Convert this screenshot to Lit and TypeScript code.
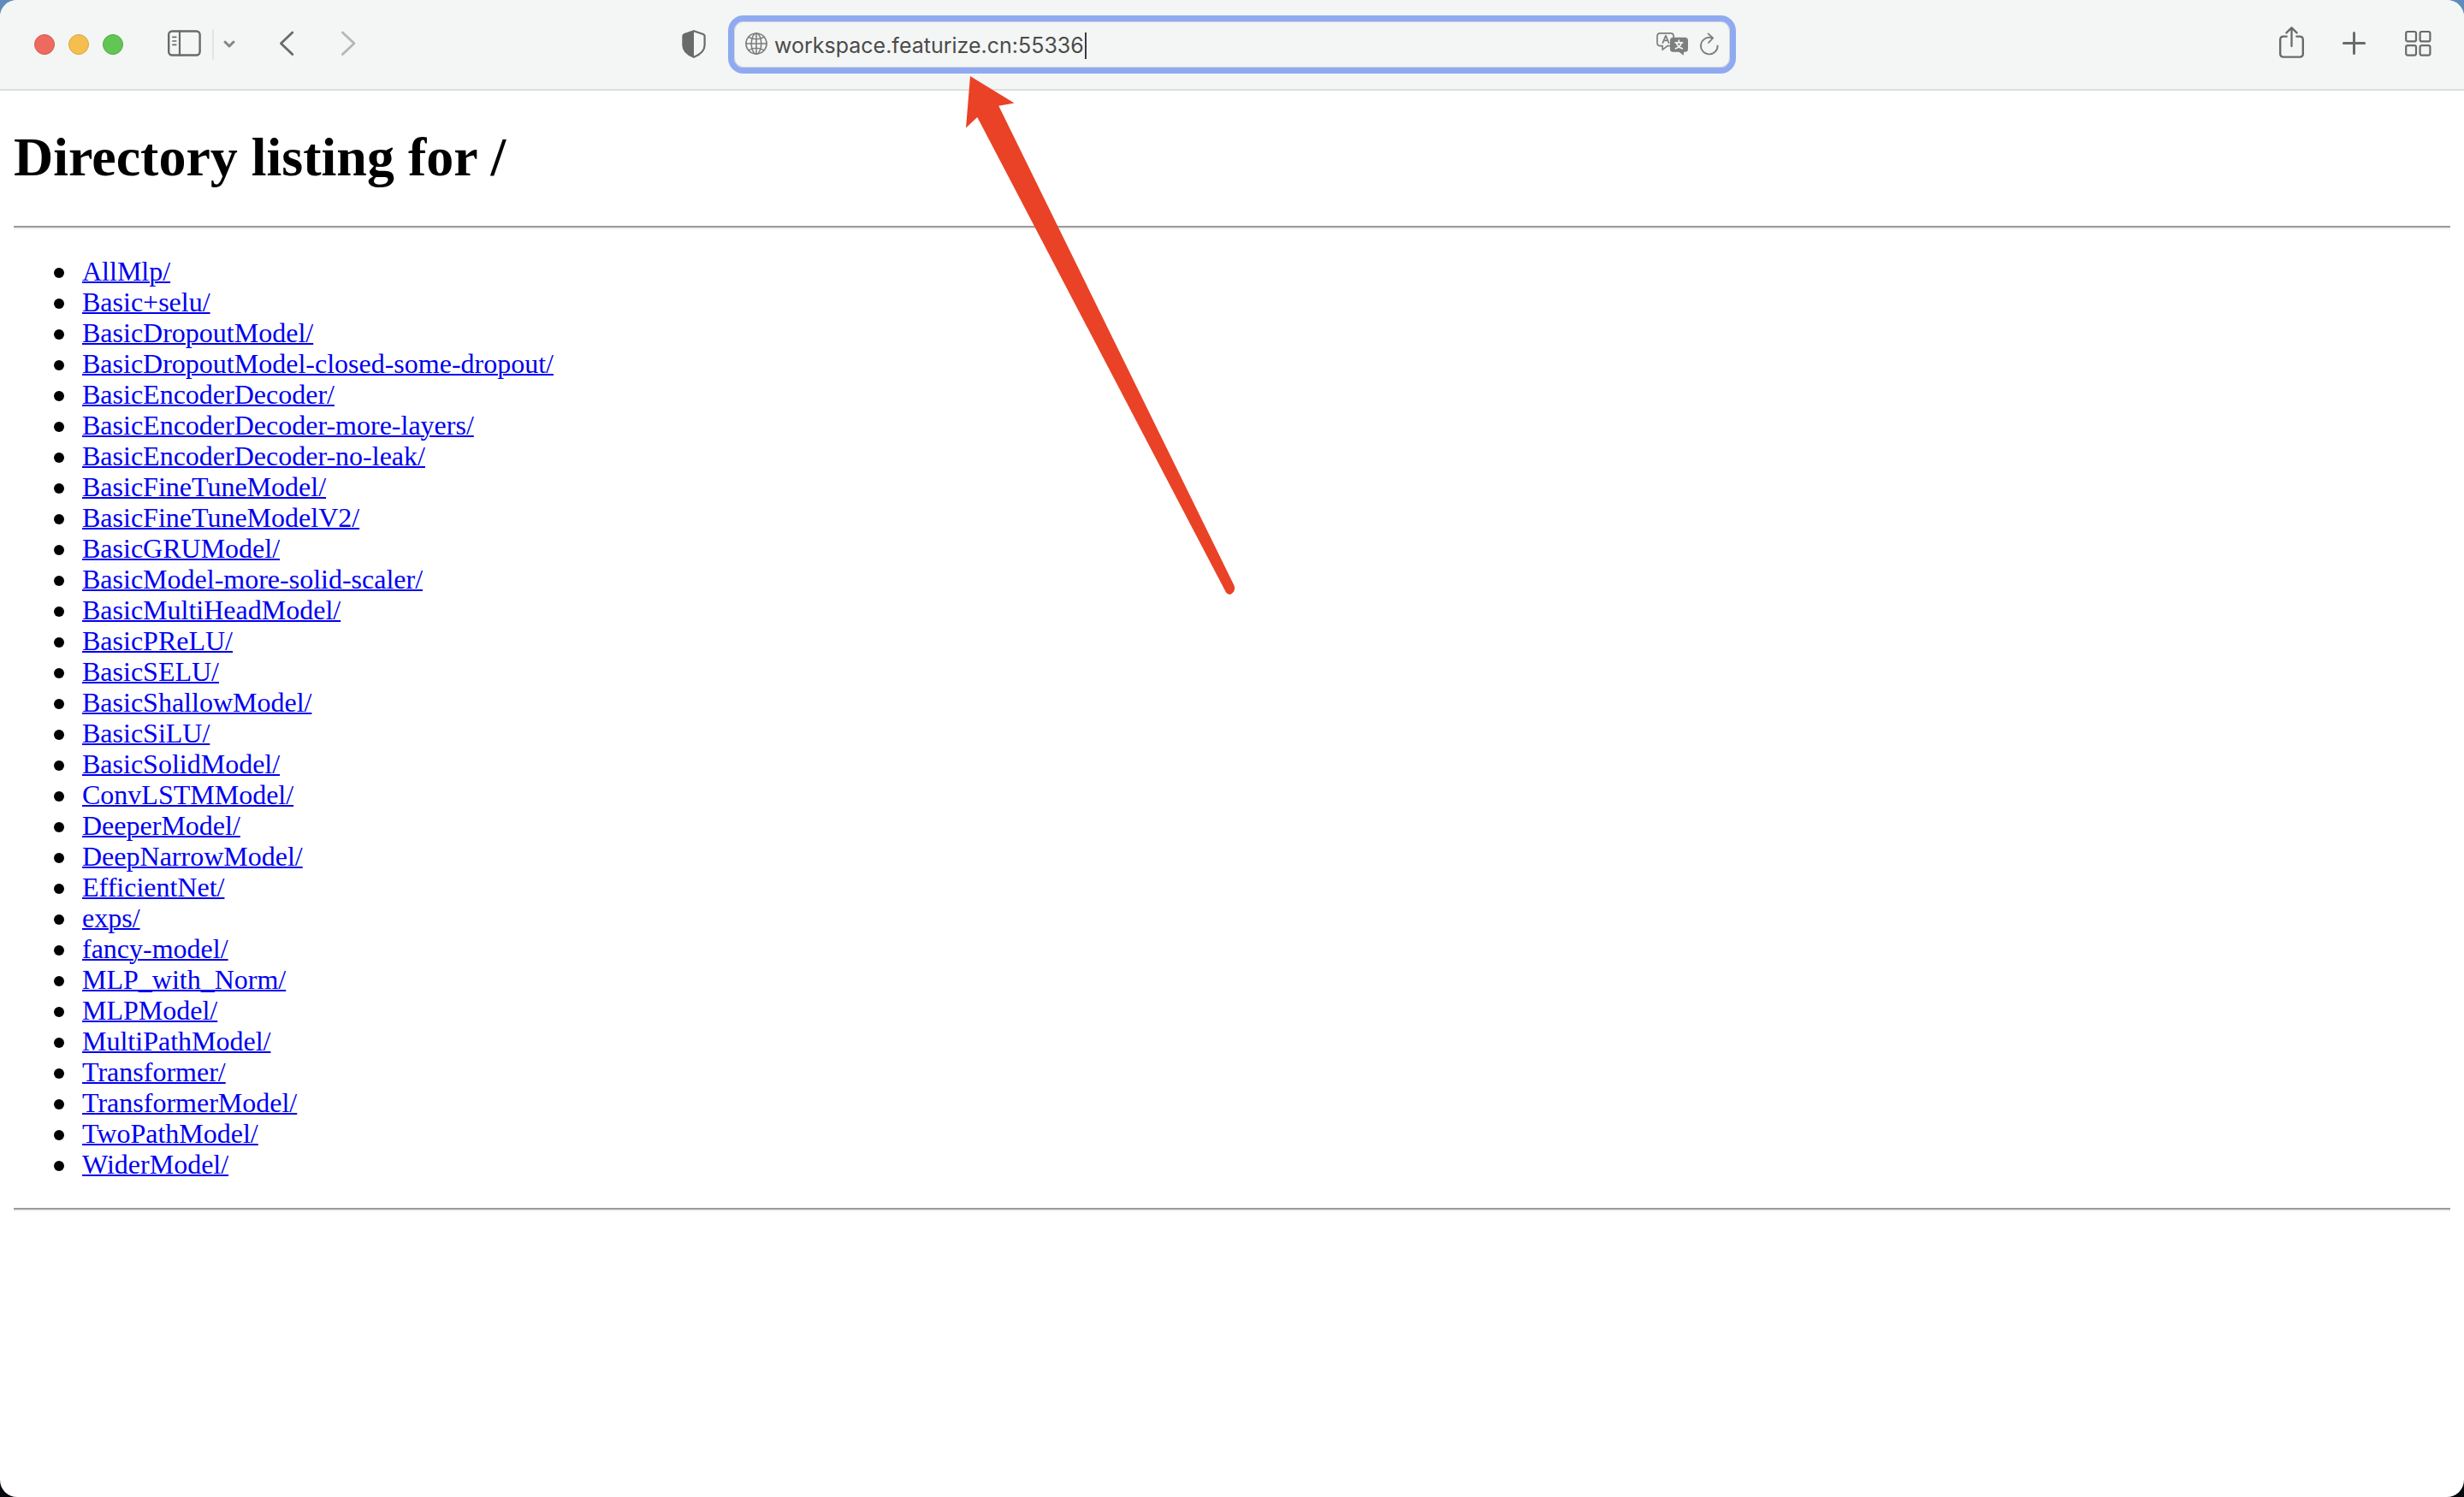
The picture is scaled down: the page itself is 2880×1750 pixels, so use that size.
import { LitElement, html, css, svg } from "lit";
import { customElement, property } from "lit/decorators.js";

const entries = [
  "AllMlp/",
  "Basic+selu/",
  "BasicDropoutModel/",
  "BasicDropoutModel-closed-some-dropout/",
  "BasicEncoderDecoder/",
  "BasicEncoderDecoder-more-layers/",
  "BasicEncoderDecoder-no-leak/",
  "BasicFineTuneModel/",
  "BasicFineTuneModelV2/",
  "BasicGRUModel/",
  "BasicModel-more-solid-scaler/",
  "BasicMultiHeadModel/",
  "BasicPReLU/",
  "BasicSELU/",
  "BasicShallowModel/",
  "BasicSiLU/",
  "BasicSolidModel/",
  "ConvLSTMModel/",
  "DeeperModel/",
  "DeepNarrowModel/",
  "EfficientNet/",
  "exps/",
  "fancy-model/",
  "MLP_with_Norm/",
  "MLPModel/",
  "MultiPathModel/",
  "Transformer/",
  "TransformerModel/",
  "TwoPathModel/",
  "WiderModel/",
];

// Every toolbar glyph is drawn on a 44px tall canvas; only the width differs.
const glyphs = {
  sidebar: {
    width: 40,
    shape: svg`
      <rect x="1.2" y="6.5" width="36.4" height="28" rx="4" stroke-width="2.4"/>
      <path d="M14 6.5V34.5" stroke-width="2.2"/>
      <path d="M5.8 13.4H9.8M5.8 18H9.8M5.8 22.4H9.8" stroke-width="1.6"/>`,
  },
  menu: { width: 16, shape: svg`<path d="M3 19L8 24L13 19" stroke-width="3"/>` },
  back: { width: 24, shape: svg`<path d="M17.8 8L4.4 20.8L17.8 33.6" stroke-width="2.8"/>` },
  forward: { width: 24, shape: svg`<path d="M4.4 8L18 20.8L4.4 33.6" stroke-width="2.8"/>` },
  shield: {
    width: 28,
    shape: svg`
      <path d="M14 6.2L25 10Q26.6 10.6 26.6 12.2V23C26.6 29.5 22 33.5 14 36.8C6 33.5 1.4 29.5 1.4 23V12.2Q1.4 10.6 3 10Z" stroke-width="2.2"/>
      <path d="M14 6L3 9.8Q1.2 10.5 1.2 12.2V23C1.2 29.5 6 33.5 14 36.8Z" fill="currentColor" stroke="none"/>`,
  },
  share: {
    width: 32,
    shape: svg`
      <path d="M11.6 12.6H7Q3.2 12.6 3.2 16.4V32.8Q3.2 36.6 7 36.6H26Q29.8 36.6 29.8 32.8V16.4Q29.8 12.6 26 12.6H21.4" stroke-width="2.4" stroke-linecap="butt"/>
      <path d="M16.5 24V2.6M10.4 8.4L16.5 2.4L22.6 8.4" stroke-width="2.3"/>`,
  },
  plus: { width: 32, shape: svg`<path d="M15.5 8.4V32.6M3.4 20.5H27.6" stroke-width="3"/>` },
  tabs: {
    width: 32,
    shape: svg`
      <rect x="2.2" y="7" width="11.8" height="11.4" rx="2" stroke-width="2.2"/>
      <rect x="18.6" y="7" width="11.8" height="11.4" rx="2" stroke-width="2.2"/>
      <rect x="2.2" y="23.2" width="11.8" height="11.4" rx="2" stroke-width="2.2"/>
      <rect x="18.6" y="23.2" width="11.8" height="11.4" rx="2" stroke-width="2.2"/>`,
  },
  globe: {
    width: 26,
    shape: svg`
      <circle cx="13" cy="21" r="12" stroke-width="1.7"/>
      <ellipse cx="13" cy="21" rx="5.8" ry="12" stroke-width="1.6"/>
      <path d="M13 9V33M1 21H25" stroke-width="1.6"/>
      <path d="M4 13.4Q13 18.2 22 13.4M4 28.6Q13 23.8 22 28.6" stroke-width="1.6"/>`,
  },
  translate: {
    width: 38,
    shape: svg`
      <path d="M15.4 23.6H13L7.2 28.2V23.6H4.6Q1 23.6 1 20V12.4Q1 8.8 4.6 8.8H16.6Q20.2 8.8 20.2 12.4V14" stroke-width="1.7"/>
      <path d="M7.4 20.2L11 11.6L14.6 20.2M8.6 17.4H13.4" stroke-width="1.7"/>
      <path d="M19.6 13.8H33.4Q37 13.8 37 17.4V27.2Q37 30.8 33.4 30.8H32V34.8L26.4 30.8H19.6Q16 30.8 16 27.2V17.4Q16 13.8 19.6 13.8Z" fill="currentColor" stroke="none"/>
      <path d="M26.4 17.2V19M22.2 19.8H30.6M23.6 20.4Q25 24.8 30.4 26.8M29.2 20.4Q27.8 24.8 22.4 26.8" stroke="#f4f6f5" stroke-width="1.7"/>`,
  },
  reload: {
    width: 24,
    shape: svg`
      <path d="M14.6 14.2A9.8 9.8 0 1 0 21.6 23.4" stroke-width="1.9"/>
      <path d="M10.6 9.4L16.2 14.4L11 19.8" stroke-width="1.9"/>`,
  },
};

@customElement("tool-glyph")
class ToolGlyph extends LitElement {
  static styles = css`
    :host {
      display: flex;
      flex: none;
    }
    .glyph {
      display: block;
      fill: none;
      stroke: currentColor;
      stroke-linecap: round;
      stroke-linejoin: round;
    }
  `;

  @property() name: keyof typeof glyphs = "plus";

  render() {
    const { width, shape } = glyphs[this.name];
    return html`<svg class="glyph" width=${width} height="44" viewBox="0 0 ${width} 44" aria-hidden="true">${shape}</svg>`;
  }
}

@customElement("browser-toolbar")
class BrowserToolbar extends LitElement {
  static styles = css`
    :host {
      display: grid;
      grid-template-columns: 1fr minmax(0, 1178px) 1fr;
      column-gap: 26px;
      align-items: center;
      min-height: 104px;
      padding: 0 38px;
      background: #f4f6f5;
      border-bottom: 2px solid #dededd;
      color: #696a6a;
    }
    .side {
      display: flex;
      align-items: center;
    }
    .end {
      justify-content: flex-end;
      gap: 42px;
    }
    button {
      display: flex;
      flex: none;
      margin: 0;
      padding: 0;
      border: 0;
      background: none;
      color: inherit;
    }
    .lights {
      display: flex;
      gap: 16px;
      padding-left: 2px;
      margin-right: 52px;
    }
    .light {
      width: 24px;
      height: 24px;
      border-radius: 50%;
      border: 1px solid;
    }
    .close {
      background: #ed6a5f;
      border-color: #d9574c;
    }
    .minimise {
      background: #f5bf4f;
      border-color: #dba53a;
    }
    .zoom {
      background: #62c655;
      border-color: #4fab41;
    }
    .divider {
      width: 2px;
      height: 36px;
      margin: 0 10px 0 12px;
      background: #e3e5e4;
    }
    .menu {
      color: #85868b;
      margin-right: 48px;
    }
    .forward {
      color: #b5b6b6;
      margin-left: 48px;
    }
    .shield {
      margin-left: auto;
    }
    .address {
      display: flex;
      align-items: center;
      height: 54px;
      padding: 0 12px 0 13px;
      border: 7px solid #8faaf0;
      border-radius: 18px;
      box-shadow: inset 0 0 0 1px #d3d5d8;
      color: #7d7e7e;
    }
    .url {
      field-sizing: content;
      min-width: 0;
      height: 44px;
      margin: 0 0 0 8px;
      padding: 2px 0 0;
      border: 0;
      outline: 0;
      background: none;
      color: #4b4b4b;
      font: 25px Inter, Roboto, sans-serif;
    }
    .caret {
      width: 2px;
      height: 31px;
      margin: 2px 0 0 1px;
      background: #3c3c3c;
    }
    .translate {
      margin-left: auto;
      margin-right: 12px;
    }
  `;

  render() {
    return html`
      <div class="side">
        <div class="lights">
          <button class="light close" aria-label="Close"></button>
          <button class="light minimise" aria-label="Minimise"></button>
          <button class="light zoom" aria-label="Zoom"></button>
        </div>
        <button aria-label="Sidebar"><tool-glyph name="sidebar"></tool-glyph></button>
        <span class="divider"></span>
        <button class="menu" aria-label="Tab groups"><tool-glyph name="menu"></tool-glyph></button>
        <button aria-label="Back"><tool-glyph name="back"></tool-glyph></button>
        <button class="forward" aria-label="Forward"><tool-glyph name="forward"></tool-glyph></button>
        <button class="shield" aria-label="Privacy report"><tool-glyph name="shield"></tool-glyph></button>
      </div>
      <div class="address">
        <tool-glyph name="globe"></tool-glyph>
        <input class="url" type="text" aria-label="Address" spellcheck="false" value="workspace.featurize.cn:55336" />
        <span class="caret"></span>
        <button class="translate" aria-label="Translate"><tool-glyph name="translate"></tool-glyph></button>
        <button aria-label="Reload"><tool-glyph name="reload"></tool-glyph></button>
      </div>
      <div class="side end">
        <button aria-label="Share"><tool-glyph name="share"></tool-glyph></button>
        <button aria-label="New tab"><tool-glyph name="plus"></tool-glyph></button>
        <button aria-label="Tab overview"><tool-glyph name="tabs"></tool-glyph></button>
      </div>
    `;
  }
}

@customElement("directory-listing")
class DirectoryListing extends LitElement {
  static styles = css`
    :host {
      display: flow-root;
      padding: 0 16px;
      color: #000;
      font: 32px/36px "Liberation Serif", serif;
    }
    .title {
      margin: 42px 0 44px;
      font-size: 64px;
      line-height: 72px;
      font-weight: bold;
    }
    .rule {
      margin: 0;
      border: 2px solid;
      border-width: 2px 0;
      border-color: #9a9a9a #eee #eee #9a9a9a;
    }
    .list {
      margin: 31px 0 33px;
      padding: 0 0 0 47px;
      list-style: none;
    }
    .item {
      display: flex;
      align-items: center;
      gap: 21px;
    }
    .item::before {
      content: "";
      width: 12px;
      height: 12px;
      margin-top: 4px;
      border-radius: 50%;
      background: currentColor;
    }
    .link {
      color: #0000ee;
      text-decoration-thickness: 2px;
    }
  `;

  render() {
    return html`
      <h1 class="title">Directory listing for /</h1>
      <hr class="rule" />
      <ul class="list">
        ${entries.map((name) => html`<li class="item"><a class="link" href="#${name}">${name}</a></li>`)}
      </ul>
      <hr class="rule" />
    `;
  }
}

@customElement("app-root")
class AppRoot extends LitElement {
  static styles = css`
    :host {
      display: block;
      background: linear-gradient(#5f8cbb 50%, #05080c 50%);
    }
    .window {
      position: relative;
      min-height: 100vh;
      overflow: hidden;
      border-radius: 20px;
      background: #fff;
    }
    .arrow {
      position: absolute;
      left: 1128px;
      top: 88px;
      fill: #ea4226;
      pointer-events: none;
    }
  `;

  render() {
    return html`
      <main class="window">
        <browser-toolbar></browser-toolbar>
        <directory-listing></directory-listing>
        <svg class="arrow" width="320" height="612" viewBox="0 0 320 612" aria-hidden="true">
          <path d="M6 1L57.5 32.6L39.3 35.8L314.3 596Q317 603 310.5 606.8Q307 607.5 305 604.6L14.3 49L1 61.6Z" />
        </svg>
      </main>
    `;
  }
}
